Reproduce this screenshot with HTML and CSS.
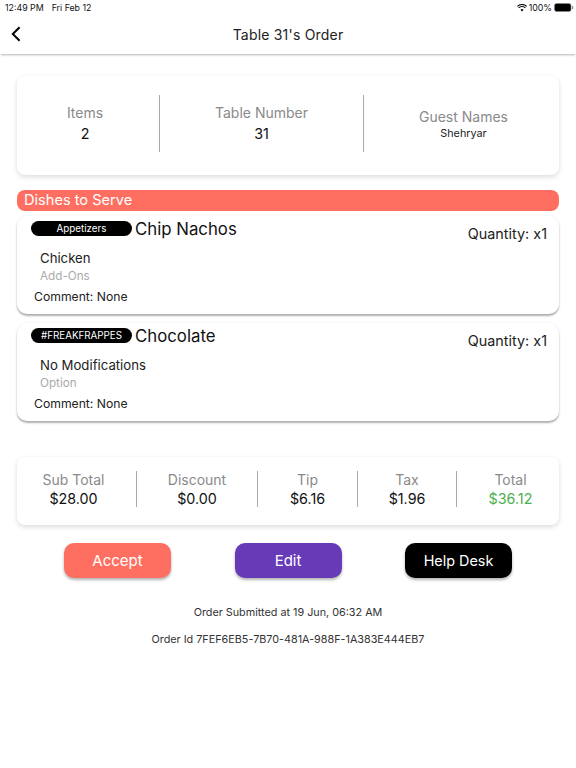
FILE: index.html
```html
<!DOCTYPE html>
<html lang="en">
<head>
<meta charset="utf-8">
<title>Table 31's Order</title>
<link rel="stylesheet" href="styles.css">
</head>
<body>
<div class="status">
  <div class="status-left"><span>12:49 PM</span><span>Fri Feb 12</span></div>
  <div class="status-right">
    <svg class="wifi" viewBox="0 0 12 9" width="10" height="8"><path d="M6 8.6 4.2 6.6a2.6 2.6 0 0 1 3.6 0z" fill="#000"/><path d="M1.9 4.4a5.8 5.8 0 0 1 8.2 0M.4 2.6a8 8 0 0 1 11.2 0" fill="none" stroke="#000" stroke-width="1.3"/></svg>
    <span>100%</span>
    <svg class="battery" viewBox="0 0 20 9" width="20" height="9"><rect x=".5" y=".5" width="16.5" height="8" rx="2" fill="#000" stroke="#888" stroke-width=".6"/><rect x="18" y="3" width="1.2" height="3" rx=".5" fill="#888"/></svg>
  </div>
</div>
<header class="nav">
  <svg class="back" viewBox="0 0 10 16" width="10" height="16"><path d="M8.6 1.2 1.8 8l6.8 6.8" fill="none" stroke="#000" stroke-width="2"/></svg>
  <h1>Table 31's Order</h1>
</header>
<main class="content">
  <section class="card info">
    <div class="cell first"><div class="label">Items</div><div class="value">2</div></div>
    <div class="cell"><div class="label">Table Number</div><div class="value">31</div></div>
    <div class="cell last"><div class="label">Guest Names</div><div class="guest">Shehryar</div></div>
  </section>
  <div class="banner">Dishes to Serve</div>
  <article class="dish">
    <div class="dish-top">
      <span class="chip">Appetizers</span><span class="dish-name">Chip Nachos</span><span class="qty">Quantity: x1</span>
    </div>
    <div class="mod">Chicken</div>
    <div class="mod-kind">Add-Ons</div>
    <div class="comment">Comment: None</div>
  </article>
  <article class="dish">
    <div class="dish-top">
      <span class="chip">#FREAKFRAPPES</span><span class="dish-name">Chocolate</span><span class="qty">Quantity: x1</span>
    </div>
    <div class="mod">No Modifications</div>
    <div class="mod-kind">Option</div>
    <div class="comment">Comment: None</div>
  </article>
  <section class="card totals">
    <div class="cell t1"><div class="label">Sub Total</div><div class="value">$28.00</div></div>
    <div class="cell"><div class="label">Discount</div><div class="value">$0.00</div></div>
    <div class="cell"><div class="label">Tip</div><div class="value">$6.16</div></div>
    <div class="cell"><div class="label">Tax</div><div class="value">$1.96</div></div>
    <div class="cell last t5"><div class="label">Total</div><div class="value green">$36.12</div></div>
  </section>
  <div class="actions">
    <button class="btn accept">Accept</button>
    <button class="btn edit">Edit</button>
    <button class="btn help">Help Desk</button>
  </div>
  <p class="meta first-meta">Order Submitted at 19 Jun, 06:32 AM</p>
  <p class="meta">Order Id 7FEF6EB5-7B70-481A-988F-1A383E444EB7</p>
</main>
</body>
</html>
```
FILE: styles.css
```css
* { box-sizing: border-box; }
html, body { margin: 0; padding: 0; }
body { width: 576px; height: 768px; overflow: hidden; background: #fff; font-family: Inter, "Liberation Sans", sans-serif; color: #111; }

.status { height: 14px; padding: 1px 2px 0 5px; display: flex; justify-content: space-between; align-items: center; font-size: 8.8px; color: #111; }
.status-left { display: flex; gap: 8px; }
.status-right { display: flex; align-items: center; gap: 2px; }

.nav { height: 40px; position: relative; display: flex; align-items: center; justify-content: center; box-shadow: 0 2px 2px -1px rgba(0,0,0,.3); }
.nav h1 { margin: 0; font-size: 14px; font-weight: 400; color: #222; letter-spacing: .2px; }
.back { position: absolute; left: 11px; top: 12px; }

.content { padding: 22px 17px 0; }
.card { background: #fff; border-radius: 8px; box-shadow: 0 2px 5px rgba(0,0,0,.14); display: grid; align-items: start; }
.info { height: 99px; grid-template-columns: 143px 204px 195px; padding-top: 19px; }
.cell { border-right: 1px solid #aaa; text-align: center; display: flex; flex-direction: column; justify-content: center; }
.cell.last { border-right: 0; }
.info .cell { height: 57px; }
.info .first { padding-right: 6px; }
.info .last { padding: 2px 0 0 4px; }
.info .label { margin-bottom: 3px; }
.info .last .label { margin-bottom: 1px; }
.label { font-size: 14px; line-height: 17px; color: #8a8a8a; margin-bottom: 1px; }
.value { font-size: 14.3px; line-height: 19px; color: #111; }
.guest { font-size: 10.8px; line-height: 16px; color: #222; }

.banner { height: 21px; margin-top: 15px; padding-left: 7px; border-radius: 8px; background: #ff6f61; color: #fff; font-size: 14.6px; line-height: 20px; }

.dish { height: 98px; margin-top: 5px; padding: 5px 12px 0 14px; border-radius: 10px; background: #fff; box-shadow: 0 2px 2px rgba(0,0,0,.3), 0 0 3px rgba(0,0,0,.06); }
.dish + .dish { margin-top: 9px; }
.dish-top { display: flex; align-items: flex-start; height: 24px; }
.chip { width: 101px; height: 15px; margin-right: 3px; border-radius: 8px; background: #000; color: #fff; font-size: 9.8px; line-height: 15px; text-align: center; }
.dish-name { font-size: 16.8px; line-height: 16px; color: #111; }
.qty { margin-left: auto; padding-top: 5px; font-size: 14.4px; line-height: 15px; color: #222; }
.mod { margin: 5px 0 0 9px; font-size: 13.2px; line-height: 16px; color: #222; }
.mod-kind { margin: 3px 0 0 9px; font-size: 11.7px; line-height: 15px; color: #aaa; }
.comment { margin: 5px 0 0 3px; font-size: 12.2px; line-height: 15px; color: #222; }

.totals { height: 68px; margin-top: 36px; grid-template-columns: 120px 121px 100px 99px 102px; padding-top: 14px; }
.totals .cell { height: 36px; }
.t1 { padding-right: 6px; }
.t5 { padding-left: 5px; }
.green { color: #4caf50; }

.actions { display: flex; justify-content: space-between; padding: 0 47px; margin-top: 18px; }
.btn { width: 107px; height: 35px; border: 0; border-radius: 10px; color: #fff; font: 400 15px Inter, sans-serif; box-shadow: 0 2px 3px rgba(0,0,0,.3); }
.accept { background: #ff6f61; }
.edit { background: #673ab7; }
.help { background: #000; font-size: 14.4px; }

.meta { margin: 12px 0 0; text-align: center; font-size: 10.8px; line-height: 15px; color: #333; }
.first-meta { margin-top: 27px; }
```
